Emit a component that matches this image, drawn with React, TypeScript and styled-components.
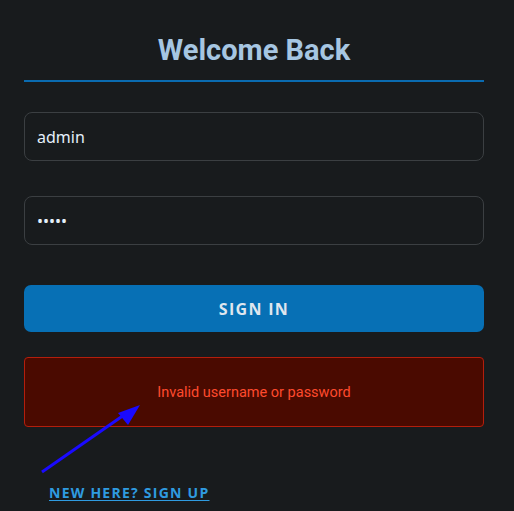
import React, { useState } from 'react';
import styled, { createGlobalStyle } from 'styled-components';

const GlobalStyle = createGlobalStyle`
  body {
    margin: 0;
    background: #181b1d;
  }
`;

const Page = styled.div`
  position: relative;
  box-sizing: border-box;
  width: 514px;
  height: 511px;
  padding: 31px 30px 0 24px;
  background: #181b1d;
  overflow: hidden;
`;

const Title = styled.h1`
  margin: 0;
  padding-bottom: 11px;
  border-bottom: 2px solid #0a6bb0;
  text-align: center;
  font-family: Roboto, 'Liberation Sans', sans-serif;
  font-weight: 700;
  font-size: 29px;
  line-height: 38px;
  color: #a6c6e2;
`;

const Form = styled.form`
  display: flex;
  flex-direction: column;
  margin-top: 30px;
`;

const Input = styled.input`
  box-sizing: border-box;
  height: 49px;
  margin-bottom: 35px;
  padding: 0 12px;
  border: 1px solid #3b3f42;
  border-radius: 8px;
  background: #181b1d;
  color: #e4effa;
  font-family: 'Noto Sans', 'Open Sans', sans-serif;
  font-size: 16px;
  outline: none;
`;

const SubmitButton = styled.button`
  height: 47px;
  margin-top: 5px;
  border: none;
  border-radius: 7px;
  background: #0770b5;
  color: #dfe6ee;
  font-family: 'Open Sans', 'Noto Sans', sans-serif;
  font-weight: 700;
  font-size: 16px;
  letter-spacing: 1.3px;
`;

const ErrorBox = styled.div`
  display: flex;
  align-items: center;
  justify-content: center;
  height: 70px;
  margin-top: 25px;
  box-sizing: border-box;
  border: 1px solid #b41e0c;
  border-radius: 4px;
  background: #4a0a00;
  color: #ff4a2e;
  font-family: Roboto, 'Liberation Sans', sans-serif;
  font-size: 14.5px;
`;

const SignUpLink = styled.a`
  display: inline-block;
  margin: 56px 0 0 25px;
  color: #2f9be0;
  font-family: 'Open Sans', 'Noto Sans', sans-serif;
  font-weight: 700;
  font-size: 14px;
  letter-spacing: 1.25px;
  text-decoration: underline;
  text-underline-offset: 2px;
`;

const Arrow = styled.svg`
  position: absolute;
  left: 0;
  top: 0;
  pointer-events: none;
`;

export default function App() {
  const [user, setUser] = useState('admin');
  const [pass, setPass] = useState('admin');

  return (
    <Page>
      <GlobalStyle />
      <Title>Welcome Back</Title>
      <Form onSubmit={(e) => e.preventDefault()}>
        <Input value={user} onChange={(e) => setUser(e.target.value)} />
        <Input type="password" value={pass} onChange={(e) => setPass(e.target.value)} />
        <SubmitButton type="submit">SIGN IN</SubmitButton>
        <ErrorBox>Invalid username or password</ErrorBox>
      </Form>
      <SignUpLink href="#">NEW HERE? SIGN UP</SignUpLink>
      <Arrow width="514" height="511" viewBox="0 0 514 511">
        <line x1="42" y1="472" x2="124" y2="415" stroke="#1a0aff" strokeWidth="3" />
        <polygon points="140,405 118,413 128,425" fill="#1a0aff" />
      </Arrow>
    </Page>
  );
}
